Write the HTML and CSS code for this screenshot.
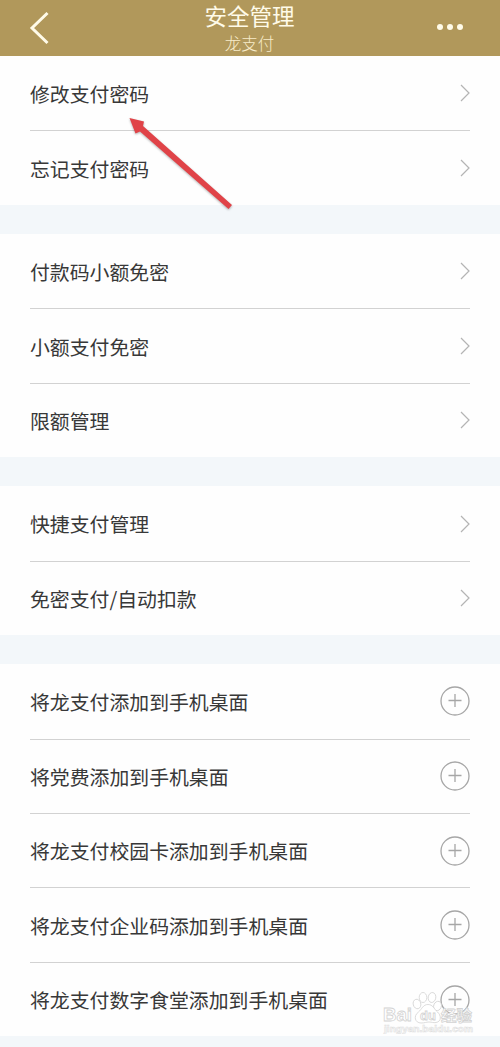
FILE: index.html
```
<!DOCTYPE html>
<html lang="zh-CN">

<head>
    <meta charset="UTF-8">
    <meta name="viewport" content="width=device-width, initial-scale=1.0">
    <title>安全管理</title>
    <link rel="stylesheet" href="styles.css">
</head>

<body>
    <svg class="symbols">
        <symbol id="arrow" viewBox="0 0 10 18">
            <path d="M1 1 L9 9 L1 17" />
        </symbol>
        <symbol id="plus" viewBox="0 0 30 30">
            <circle cx="15" cy="15" r="14" />
            <path d="M8.5 14.5 H21.5 M15 8 V21" />
        </symbol>
    </svg>

    <div class="header">
        <svg class="back" viewBox="0 0 20 34">
            <path d="M18.5 2 L3 17 L18.5 32" />
        </svg>
        <div class="title">
            <h1>安全管理</h1>
            <p>龙支付</p>
        </div>
        <div class="more"><i></i><i></i><i></i></div>
    </div>

    <ul class="group">
        <li><span>修改支付密码</span><svg class="arrow"><use href="#arrow" /></svg></li>
        <li><span>忘记支付密码</span><svg class="arrow"><use href="#arrow" /></svg></li>
    </ul>

    <ul class="group">
        <li><span>付款码小额免密</span><svg class="arrow"><use href="#arrow" /></svg></li>
        <li><span>小额支付免密</span><svg class="arrow"><use href="#arrow" /></svg></li>
        <li><span>限额管理</span><svg class="arrow"><use href="#arrow" /></svg></li>
    </ul>

    <ul class="group">
        <li><span>快捷支付管理</span><svg class="arrow"><use href="#arrow" /></svg></li>
        <li><span>免密支付/自动扣款</span><svg class="arrow"><use href="#arrow" /></svg></li>
    </ul>

    <ul class="group">
        <li><span>将龙支付添加到手机桌面</span><svg class="plus"><use href="#plus" /></svg></li>
        <li><span>将党费添加到手机桌面</span><svg class="plus"><use href="#plus" /></svg></li>
        <li><span>将龙支付校园卡添加到手机桌面</span><svg class="plus"><use href="#plus" /></svg></li>
        <li><span>将龙支付企业码添加到手机桌面</span><svg class="plus"><use href="#plus" /></svg></li>
        <li><span>将龙支付数字食堂添加到手机桌面</span><svg class="plus"><use href="#plus" /></svg></li>
    </ul>

    <!-- 红色指示箭头 -->
    <svg class="pointer" viewBox="0 0 110 100">
        <path d="M4.5 3 L19 6.5 L18 11 L107 90 L103.5 94 L15 16.5 L10.5 18.5 Z" />
    </svg>

    <!-- 水印 -->
    <svg class="watermark" viewBox="0 0 100 50">
        <g class="paw">
            <ellipse cx="36" cy="20" rx="3.8" ry="4.8" transform="rotate(-15 36 20)" />
            <ellipse cx="42" cy="13.5" rx="3.8" ry="5" />
            <ellipse cx="51" cy="13.5" rx="3.8" ry="5" transform="rotate(10 51 13.5)" />
            <ellipse cx="56.5" cy="22" rx="3.8" ry="4.8" transform="rotate(20 56.5 22)" />
            <path d="M47 20.5 C42 20.5 41 25 37.5 28 C32 32 34 39 40 39 C44 39 45 38 48 38 C51 38 52 39 55 38.5 C61 37.5 60 31 56.5 28 C53 25 52 20.5 47 20.5 Z" />
        </g>
        <text class="logo" x="2" y="37" textLength="29" lengthAdjust="spacingAndGlyphs">Bai</text>
        <text class="du" x="39" y="36">du</text>
        <text class="cn" x="60" y="36.5" textLength="31" lengthAdjust="spacingAndGlyphs">经验</text>
        <text class="url" x="3" y="48" textLength="89" lengthAdjust="spacingAndGlyphs">jingyan.baidu.com</text>
    </svg>
</body>

</html>
```
FILE: styles.css
```
body {
    position: relative;
    margin: 0;
    height: 1047px;
    overflow: hidden;
    background-color: #f3f7fa;
    font-family: "Noto Sans CJK SC", sans-serif;
    color: #383838;
}

.symbols {
    display: none;
}

.header {
    display: flex;
    align-items: center;
    justify-content: space-between;
    box-sizing: border-box;
    height: 56px;
    padding: 0 37px 0 29px;
    background-color: #b1985b;
    color: #fffbe9;
}

.back {
    width: 20px;
    height: 34px;
    margin-right: 6px;
    fill: none;
    stroke: #fffbe9;
    stroke-width: 3;
}

.title {
    padding-left: 7px;
    text-align: center;
}

.title h1 {
    margin: 1px 0 2px;
    font-size: 22.5px;
    font-weight: 400;
    line-height: 28px;
}

.title p {
    margin: 0;
    font-size: 16.5px;
    font-weight: 300;
    line-height: 25px;
    color: #f7ebc9;
}

.more {
    display: flex;
    gap: 4px;
    margin-top: -2px;
}

.more i {
    width: 6px;
    height: 6px;
    border-radius: 50%;
    background-color: #fffbe9;
}

.group {
    margin: 0 0 29.2px;
    padding: 0 30px;
    list-style: none;
    background-color: #fefefe;
}

.group li {
    display: flex;
    align-items: center;
    justify-content: space-between;
    box-sizing: border-box;
    height: 74.4px;
    font-size: 19.87px;
}

/* 行之间的分割线 */
.group li + li {
    border-top: 1px solid #d2d2d2;
}

.arrow {
    width: 10px;
    height: 18px;
    fill: none;
    stroke: #b4b4b4;
    stroke-width: 1.2;
}

.plus {
    width: 30px;
    height: 30px;
    fill: none;
    stroke: #a6a6a6;
    stroke-width: 1.3;
}

.pointer {
    position: absolute;
    left: 125px;
    top: 115px;
    width: 110px;
    height: 100px;
    fill: #e04348;
    filter: drop-shadow(0 1px 1px rgba(0, 0, 0, 0.3));
}

.watermark {
    position: absolute;
    left: 381px;
    top: 984px;
    width: 100px;
    height: 50px;
    font-family: "Liberation Sans", "Noto Sans CJK SC", sans-serif;
    font-weight: 700;
    fill: #fff;
    stroke: #d3d3d3;
    stroke-width: 0.8;
}

.logo {
    font-size: 19px;
}

.du {
    font-size: 13px;
}

.cn {
    font-size: 15px;
}

.url {
    font-size: 9.5px;
    stroke: #e0e0e0;
    stroke-width: 0.6;
}
```
